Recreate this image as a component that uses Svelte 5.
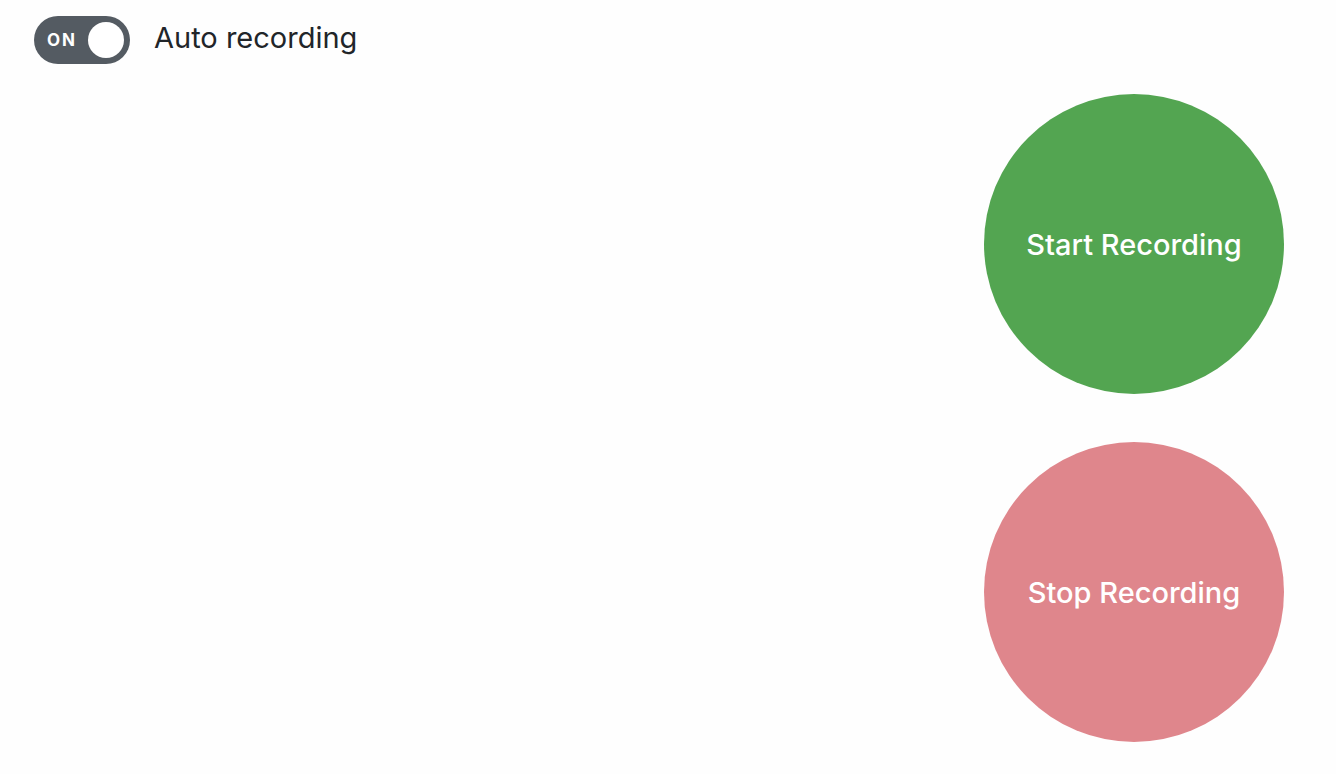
<script>
  let auto = $state(true);
</script>

<main>
  <label class="auto">
    <span class="switch" class:off={!auto}>
      <input type="checkbox" role="switch" bind:checked={auto} />
      <span class="state" aria-hidden="true">{auto ? 'ON' : 'OFF'}</span>
      <span class="knob"></span>
    </span>
    <span class="caption">Auto recording</span>
  </label>
  <div class="actions">
    <button type="button" class="start">Start Recording</button>
    <button type="button" class="stop" disabled>Stop Recording</button>
  </div>
</main>

<style>
  :global(body) {
    margin: 0;
    background: #fefefe;
  }
  main {
    box-sizing: border-box;
    display: flex;
    flex-direction: column;
    gap: 30px;
    padding: 16px 52px 32px 34px;
    font-family: Inter, "Liberation Sans", sans-serif;
    color: #212529;
  }
  .auto {
    display: flex;
    align-self: flex-start;
    align-items: center;
    gap: 24px;
    cursor: pointer;
  }
  .switch {
    position: relative;
    box-sizing: border-box;
    display: flex;
    align-items: center;
    justify-content: space-between;
    width: 96px;
    height: 48px;
    padding: 0 6px 0 13px;
    border-radius: 24px;
    background: #545b62;
  }
  .switch.off {
    flex-direction: row-reverse;
    padding: 0 13px 0 6px;
    background: #adb5bd;
  }
  .switch input {
    position: absolute;
    inset: 0;
    width: 100%;
    height: 100%;
    margin: 0;
    opacity: 0;
    cursor: pointer;
  }
  .state {
    color: #fff;
    font-size: 17px;
    font-weight: 700;
    line-height: 24px;
    letter-spacing: 2px;
  }
  .knob {
    width: 36px;
    height: 36px;
    border-radius: 50%;
    background: #fff;
  }
  .caption {
    font-size: 29px;
    line-height: 40px;
    padding-bottom: 4px;
  }
  .actions {
    display: flex;
    flex-direction: column;
    align-items: flex-end;
    gap: 48px;
  }
  button {
    width: 300px;
    height: 300px;
    padding: 2px 0 0;
    border: 0;
    border-radius: 50%;
    color: #fff;
    font-family: inherit;
    font-size: 29px;
    font-weight: 500;
    line-height: 48px;
    cursor: pointer;
  }
  .start {
    background: #53a551;
  }
  .stop {
    background: #df868c;
    cursor: default;
  }
</style>
